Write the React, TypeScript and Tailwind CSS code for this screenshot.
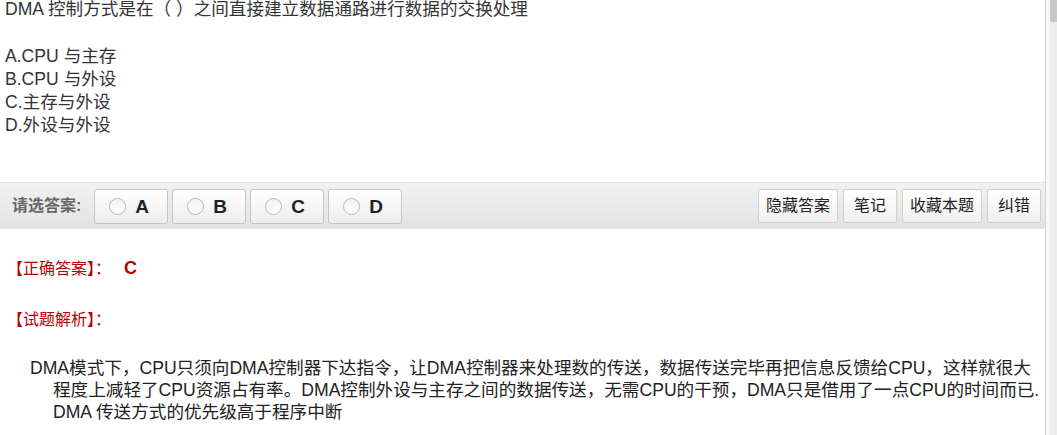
import React from 'react';

const font = { fontFamily: '"Liberation Sans", "Noto Sans CJK SC", sans-serif' };

const options = ['A.CPU 与主存', 'B.CPU 与外设', 'C.主存与外设', 'D.外设与外设'];
const choices = ['A', 'B', 'C', 'D'];
const tools = ['隐藏答案', '笔记', '收藏本题', '纠错'];

const ChoiceButton: React.FC<{ label: string }> = ({ label }) => (
  <button className="h-[35px] w-[74px] rounded-[3px] border border-[#c4c4c4] bg-gradient-to-b from-white to-[#ededed] flex items-center pl-[14px] gap-[9px]">
    <span className="h-[17px] w-[17px] rounded-full border border-[#b8b8b8] bg-gradient-to-b from-[#f2f2f2] to-white" />
    <span className="text-[19px] font-bold text-[#222] leading-none">{label}</span>
  </button>
);

const App: React.FC = () => {
  return (
    <div className="flex h-[435px] w-[1057px] overflow-hidden bg-white text-[#333]" style={font}>
      <div className="w-[1046px] border-r border-[#d6d6d6]">
        <div className="pl-[5px] text-[17.6px]">
          <p className="leading-[18px]">DMA 控制方式是在（&nbsp;）之间直接建立数据通路进行数据的交换处理</p>
          <div className="mt-[27px] leading-[23px]">
            {options.map((o) => (
              <p key={o}>{o}</p>
            ))}
          </div>
        </div>

        <div className="mt-[45px] h-[47px] border-t border-[#e2e2e2] bg-gradient-to-b from-[#f1f1f1] to-[#e3e3e3] flex items-center justify-between pl-[12px] pr-[4px]">
          <div className="flex items-center">
            <span className="text-[16px] font-bold text-[#666] mr-[13px]">请选答案:</span>
            <div className="flex gap-[4px]">
              {choices.map((c) => (
                <ChoiceButton key={c} label={c} />
              ))}
            </div>
          </div>
          <div className="flex gap-[5px]">
            {tools.map((t) => (
              <button
                key={t}
                className="h-[34px] min-w-[54px] px-[7px] rounded-[2px] border border-[#cfcfcf] bg-gradient-to-b from-white to-[#f0f0f0] text-[16px] text-[#222]"
              >
                {t}
              </button>
            ))}
          </div>
        </div>

        <div className="pl-[7px] pt-[28px] text-[16px] leading-[23px] text-[#b80000]">
          <p className="flex items-baseline">
            <span>【正确答案】：</span>
            <span className="ml-[13px] text-[18px] font-bold">C</span>
          </p>
          <p className="mt-[28px]">【试题解析】：</p>
        </div>

        <p className="mt-[26px] pl-[53px] -indent-[23px] text-[17.6px] leading-[22px] text-[#222]">
          DMA模式下，CPU只须向DMA控制器下达指令，让DMA控制器来处理数的传送，数据传送完毕再把信息反馈给CPU，这样就很大程度上减轻了CPU资源占有率。DMA控制外设与主存之间的数据传送，无需CPU的干预，DMA只是借用了一点CPU的时间而已.
          <br />
          DMA 传送方式的优先级高于程序中断
        </p>
      </div>
      <div className="flex-1 flex bg-[#f7f7f7] pl-[4px]">
        <div className="w-full bg-[#ececec]">
          <div className="h-[22px] bg-[#c9c9c9]" />
        </div>
      </div>
    </div>
  );
};

export default App;
